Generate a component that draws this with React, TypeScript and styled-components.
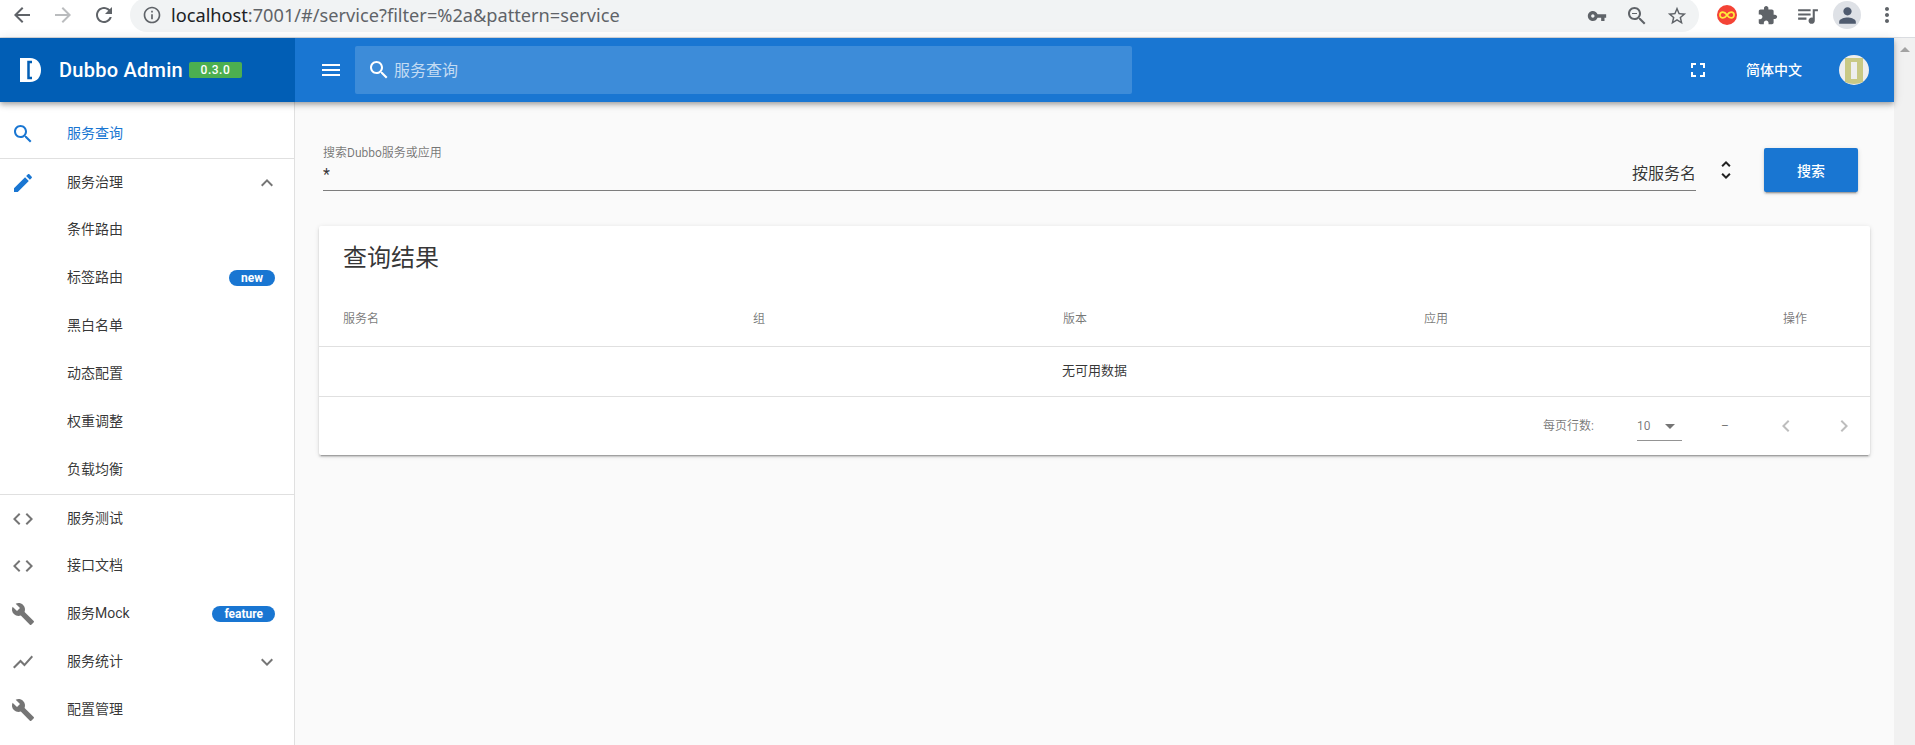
import React from "react";
import styled, { createGlobalStyle } from "styled-components";

const paths = {
  search: "M15.5 14h-.79l-.28-.27C15.41 12.59 16 11.11 16 9.5 16 5.91 13.09 3 9.5 3S3 5.91 3 9.5 5.91 16 9.5 16c1.61 0 3.09-.59 4.23-1.57l.27.28v.79l5 4.99L20.49 19l-4.99-5zm-6 0C7.01 14 5 11.99 5 9.5S7.01 5 9.5 5 14 7.01 14 9.5 11.99 14 9.5 14z",
  edit: "M3 17.25V21h3.75L17.81 9.94l-3.75-3.75L3 17.25zM20.71 7.04c.39-.39.39-1.02 0-1.41l-2.34-2.34c-.39-.39-1.02-.39-1.41 0l-1.83 1.83 3.75 3.75 1.83-1.83z",
  code: "M9.4 16.6L4.8 12l4.6-4.6L8 6l-6 6 6 6 1.4-1.4zm5.2 0l4.6-4.6-4.6-4.6L16 6l6 6-6 6-1.4-1.4z",
  build: "M22.7 19l-9.1-9.1c.9-2.3.4-5-1.5-6.9-2-2-5-2.4-7.4-1.3L9 6 6 9 1.6 4.7C.4 7.1.9 10.1 2.9 12.1c1.9 1.9 4.6 2.4 6.9 1.5l9.1 9.1c.4.4 1 .4 1.4 0l2.3-2.3c.5-.4.5-1.1.1-1.4z",
  chart: "M3.5 18.49l6-6.01 4 4L22 6.92l-1.41-1.41-7.09 7.97-4-4L2 16.99z",
  menu: "M3 18h18v-2H3v2zm0-5h18v-2H3v2zm0-7v2h18V6H3z",
  fullscreen: "M7 14H5v5h5v-2H7v-3zm-2-4h2V7h3V5H5v5zm12 7h-3v2h5v-5h-2v3zM14 5v2h3v3h2V5h-5z",
  expandLess: "M12 8l-6 6 1.41 1.41L12 10.83l4.59 4.58L18 14z",
  expandMore: "M16.59 8.59L12 13.17 7.41 8.59 6 10l6 6 6-6z",
  unfold: "M12 5.83L15.17 9l1.41-1.41L12 3 7.41 7.59 8.83 9 12 5.83zm0 12.34L8.83 15l-1.41 1.41L12 21l4.59-4.59L15.17 15 12 18.17z",
  dropDown: "M7 10l5 5 5-5z",
  chevronLeft: "M15.41 7.41L14 6l-6 6 6 6 1.41-1.41L10.83 12z",
  chevronRight: "M10 6L8.59 7.41 13.17 12l-4.58 4.59L10 18l6-6z",
  back: "M20 11H7.83l5.59-5.59L12 4l-8 8 8 8 1.41-1.41L7.83 13H20v-2z",
  forward: "M12 4l-1.41 1.41L16.17 11H4v2h12.17l-5.58 5.59L12 20l8-8z",
  reload: "M17.65 6.35C16.2 4.9 14.21 4 12 4c-4.42 0-7.99 3.58-7.99 8s3.57 8 7.99 8c3.73 0 6.84-2.55 7.73-6h-2.08c-.82 2.33-3.04 4-5.65 4-3.31 0-6-2.69-6-6s2.69-6 6-6c1.66 0 3.14.69 4.22 1.78L13 11h7V4l-2.35 2.35z",
  info: "M11 7h2v2h-2zm0 4h2v6h-2zm1-9C6.48 2 2 6.48 2 12s4.48 10 10 10 10-4.48 10-10S17.52 2 12 2zm0 18c-4.41 0-8-3.59-8-8s3.59-8 8-8 8 3.59 8 8-3.59 8-8 8z",
  key: "M12.65 10C11.83 7.67 9.61 6 7 6c-3.31 0-6 2.69-6 6s2.69 6 6 6c2.61 0 4.83-1.67 5.65-4H17v4h4v-4h2v-4H12.65zM7 14c-1.1 0-2-.9-2-2s.9-2 2-2 2 .9 2 2-.9 2-2 2z",
  zoomOut: "M15.5 14h-.79l-.28-.27C15.41 12.59 16 11.11 16 9.5 16 5.91 13.09 3 9.5 3S3 5.91 3 9.5 5.91 16 9.5 16c1.61 0 3.09-.59 4.23-1.57l.27.28v.79l5 4.99L20.49 19l-4.99-5zm-6 0C7.01 14 5 11.99 5 9.5S7.01 5 9.5 5 14 7.01 14 9.5 11.99 14 9.5 14zM7 9h5v1H7z",
  star: "M22 9.24l-7.19-.62L12 2 9.19 8.63 2 9.24l5.46 4.73L5.82 21 12 17.27 18.18 21l-1.63-7.03L22 9.24zM12 15.4l-3.76 2.27 1-4.28-3.32-2.88 4.38-.38L12 6.1l1.71 4.04 4.38.38-3.32 2.88 1 4.28L12 15.4z",
  puzzle: "M20.5 11H19V7c0-1.1-.9-2-2-2h-4V3.5C13 2.12 11.88 1 10.5 1S8 2.12 8 3.5V5H4c-1.1 0-1.99.9-1.99 2v3.8H3.5c1.49 0 2.7 1.21 2.7 2.7s-1.21 2.7-2.7 2.7H2V20c0 1.1.9 2 2 2h3.8v-1.5c0-1.49 1.21-2.7 2.7-2.7 1.49 0 2.7 1.21 2.7 2.7V22H17c1.1 0 2-.9 2-2v-4h1.5c1.38 0 2.5-1.12 2.5-2.5S21.88 11 20.5 11z",
  queue: "M15 6H3v2h12V6zm0 4H3v2h12v-2zM3 16h8v-2H3v2zM17 6v8.18c-.31-.11-.65-.18-1-.18-1.66 0-3 1.34-3 3s1.34 3 3 3 3-1.34 3-3V8h3V6h-5z",
  person: "M12 12c2.21 0 4-1.79 4-4s-1.79-4-4-4-4 1.79-4 4 1.79 4 4 4zm0 2c-2.67 0-8 1.34-8 4v2h16v-2c0-2.66-5.33-4-8-4z",
  more: "M12 8c1.1 0 2-.9 2-2s-.9-2-2-2-2 .9-2 2 .9 2 2 2zm0 2c-1.1 0-2 .9-2 2s.9 2 2 2 2-.9 2-2-.9-2-2-2zm0 6c-1.1 0-2 .9-2 2s.9 2 2 2 2-.9 2-2-.9-2-2-2z",
};

type IconName = keyof typeof paths;

const GlobalStyle = createGlobalStyle`
  html, body {
    margin: 0;
    height: 100%;
    overflow: hidden;
  }
  body {
    font-family: Roboto, "Noto Sans CJK SC", sans-serif;
    color: rgba(0, 0, 0, 0.8);
  }
`;

const Svg = styled.svg<{ $size: number; $color: string }>`
  display: block;
  flex: none;
  width: ${(p) => p.$size}px;
  height: ${(p) => p.$size}px;
  fill: ${(p) => p.$color};
`;

const Icon: React.FC<{ name: IconName; size?: number; color?: string }> = ({
  name,
  size = 24,
  color = "rgba(0,0,0,.54)",
}) => (
  <Svg viewBox="0 0 24 24" $size={size} $color={color}>
    <path d={paths[name]} />
  </Svg>
);

const Shell = styled.div`
  display: flex;
  flex-direction: column;
  width: 1915px;
  height: 745px;
  overflow: hidden;
`;

/* browser chrome */
const BrowserBar = styled.div`
  flex: none;
  display: flex;
  align-items: flex-start;
  box-sizing: border-box;
  height: 38px;
  padding-left: 2px;
  background: #fff;
  border-bottom: 1px solid #dadce0;
`;

const NavSlot = styled.div<{ $width?: number }>`
  flex: none;
  display: flex;
  align-items: center;
  justify-content: center;
  width: ${(p) => p.$width ?? 40}px;
  height: 30px;
`;

const NavButtons = styled.div`
  display: flex;
  gap: 1px;
  margin-right: 6px;
`;

const AddressPill = styled.div`
  flex: none;
  display: flex;
  align-items: center;
  box-sizing: border-box;
  width: 1569px;
  height: 34px;
  margin-top: -2px;
  padding: 0 2px 0 12px;
  background: #f1f3f4;
  border-radius: 17px;
`;

const Url = styled.div`
  flex: 1;
  margin-left: 9px;
  font-family: "Noto Sans", sans-serif;
  font-size: 18.2px;
  color: #5f6368;
  white-space: nowrap;

  b {
    font-weight: 400;
    color: #202124;
  }
`;

const PillActions = styled.div`
  display: flex;
  margin-top: 2px;
`;

const Extensions = styled.div`
  display: flex;
  margin-left: 8px;
`;

const ProfileCircle = styled.div`
  display: flex;
  align-items: center;
  justify-content: center;
  width: 28px;
  height: 28px;
  border-radius: 50%;
  background: #dee1e6;
`;

/* page */
const Viewport = styled.div`
  flex: 1;
  display: flex;
  min-height: 0;
`;

const Page = styled.div`
  flex: 1;
  display: flex;
  flex-direction: column;
  min-width: 0;
  background: #fafafa;
`;

const ScrollTrack = styled.div`
  flex: none;
  display: flex;
  justify-content: center;
  width: 21px;
  padding-top: 9px;
  box-sizing: border-box;
  background: #f1f1f1;
`;

const ScrollArrow = styled.div`
  width: 0;
  height: 0;
  border-left: 5px solid transparent;
  border-right: 5px solid transparent;
  border-bottom: 5px solid #a3a3a3;
`;

const AppBar = styled.header`
  flex: none;
  position: relative;
  z-index: 2;
  display: flex;
  align-items: center;
  height: 64px;
  padding-right: 25px;
  background: #1976d2;
  box-shadow: 0 2px 4px -1px rgba(0, 0, 0, 0.2), 0 4px 5px 0 rgba(0, 0, 0, 0.14),
    0 1px 10px 0 rgba(0, 0, 0, 0.12);
`;

const Brand = styled.div`
  flex: none;
  display: flex;
  align-items: center;
  box-sizing: border-box;
  width: 295px;
  height: 100%;
  padding-left: 20px;
  background: #015eb5;
`;

const BrandTitle = styled.div`
  margin-left: 18px;
  font-size: 20px;
  font-weight: 500;
  letter-spacing: 0.25px;
  color: #fff;
  white-space: nowrap;
`;

const VersionBadge = styled.span`
  margin-left: 6px;
  width: 53px;
  height: 16px;
  border-radius: 2px;
  background: #4caf50;
  color: #fff;
  font-size: 12px;
  font-weight: 500;
  line-height: 17px;
  letter-spacing: 0.5px;
  text-align: center;
`;

const MenuToggle = styled.div`
  margin-left: 24px;
`;

const BarSearch = styled.div`
  display: flex;
  align-items: center;
  box-sizing: border-box;
  width: 777px;
  height: 48px;
  margin-left: 12px;
  padding-left: 12px;
  border-radius: 2px;
  background: rgba(255, 255, 255, 0.16);
  font-size: 16px;
  color: rgba(255, 255, 255, 0.7);

  span {
    margin-left: 3px;
    padding-bottom: 2px;
  }
`;

const BarSpacer = styled.div`
  flex: 1;
`;

const Lang = styled.div`
  margin: 0 37px 0 36px;
  padding-bottom: 2px;
  font-size: 14px;
  font-weight: 500;
  color: #fff;
`;

const Avatar = styled.svg`
  display: block;
  flex: none;
  width: 30px;
  height: 30px;
`;

const Below = styled.div`
  flex: 1;
  display: flex;
  min-height: 0;
`;

/* sidebar */
const Sidebar = styled.nav`
  flex: none;
  box-sizing: border-box;
  width: 295px;
  padding-top: 8px;
  background: #fff;
  border-right: 1px solid #e0e0e0;
  overflow: hidden;
`;

const NavRow = styled.div<{ $active?: boolean; $divided?: boolean }>`
  display: flex;
  align-items: center;
  box-sizing: border-box;
  height: 48px;
  padding: 0 15px 0 11px;
  font-size: 14px;
  color: ${(p) => (p.$active ? "#1976d2" : "rgba(0,0,0,.8)")};
  border-top: ${(p) => (p.$divided ? "1px solid #e0e0e0" : "0")};
`;

const NavIcon = styled.div`
  flex: none;
  width: 56px;
`;

const NavLabel = styled.div`
  flex: 1;
  padding-bottom: 4px;
`;

const Pill = styled.span`
  height: 16px;
  margin-right: 4px;
  padding: 0 12px;
  border-radius: 8px;
  background: #1976d2;
  color: #fff;
  font-size: 12px;
  font-weight: 700;
  line-height: 16px;
`;

/* main */
const Main = styled.main`
  flex: 1;
  min-width: 0;
  padding: 42px 24px 0;
`;

const SearchRow = styled.div`
  display: flex;
  align-items: flex-start;
  height: 48px;
  padding: 0 12px 0 4px;
`;

const Field = styled.div`
  flex: 1;
`;

const FieldLabel = styled.div`
  height: 16px;
  margin-top: 1px;
  margin-bottom: -1px;
  font-size: 12px;
  line-height: 16px;
  color: rgba(0, 0, 0, 0.54);
`;

const FieldValue = styled.div`
  display: flex;
  align-items: center;
  justify-content: space-between;
  height: 31px;
  box-sizing: border-box;
  padding-bottom: 6px;
  font-size: 16px;
  border-bottom: 1px solid rgba(0, 0, 0, 0.5);

  span:first-child {
    padding-top: 4px;
  }
`;

const Toggle = styled.div`
  margin: 14px 0 0 18px;
`;

const SearchButton = styled.button`
  width: 94px;
  height: 44px;
  margin: 4px 0 0 26px;
  border: 0;
  border-radius: 2px;
  background: #1976d2;
  color: #fff;
  font-family: inherit;
  font-size: 14px;
  font-weight: 500;
  box-shadow: 0 3px 1px -2px rgba(0, 0, 0, 0.2), 0 2px 2px 0 rgba(0, 0, 0, 0.14),
    0 1px 5px 0 rgba(0, 0, 0, 0.12);
`;

const Card = styled.section`
  margin-top: 34px;
  border-radius: 2px;
  background: #fff;
  box-shadow: 0 3px 1px -2px rgba(0, 0, 0, 0.2), 0 2px 2px 0 rgba(0, 0, 0, 0.14),
    0 1px 5px 0 rgba(0, 0, 0, 0.12);
`;

const CardTitle = styled.h2`
  margin: 0;
  padding: 16px 24px;
  font-size: 24px;
  font-weight: 400;
  line-height: 32px;
`;

const HeadRow = styled.div`
  display: grid;
  grid-template-columns: 410px 310px 361px 359px auto;
  align-items: center;
  box-sizing: border-box;
  height: 57px;
  padding: 0 0 2px 24px;
  border-bottom: 1px solid #e0e0e0;
  font-size: 12px;
  color: rgba(0, 0, 0, 0.54);
`;

const EmptyRow = styled.div`
  display: flex;
  align-items: center;
  justify-content: center;
  box-sizing: border-box;
  height: 50px;
  padding-bottom: 5px;
  border-bottom: 1px solid #e0e0e0;
  font-size: 13px;
`;

const Pager = styled.div`
  display: flex;
  align-items: center;
  justify-content: flex-end;
  height: 58px;
  padding-right: 14px;
  font-size: 12px;
  color: rgba(0, 0, 0, 0.54);
`;

const PagerLabel = styled.div`
  padding-bottom: 4px;
`;

const PageSize = styled.div`
  display: flex;
  align-items: center;
  justify-content: space-between;
  box-sizing: border-box;
  width: 45px;
  height: 30px;
  margin-left: 43px;
  border-bottom: 1px solid rgba(0, 0, 0, 0.42);
`;

const PageRange = styled.div`
  width: 7px;
  margin: 0 46px 0 39px;
`;

const PageNext = styled.div`
  margin-left: 34px;
`;

const links: {
  label: string;
  icon?: IconName;
  iconColor?: string;
  active?: boolean;
  divided?: boolean;
  chevron?: IconName;
  badge?: string;
}[] = [
  { label: "服务查询", icon: "search", iconColor: "#1976d2", active: true },
  { label: "服务治理", icon: "edit", iconColor: "#1976d2", divided: true, chevron: "expandLess" },
  { label: "条件路由" },
  { label: "标签路由", badge: "new" },
  { label: "黑白名单" },
  { label: "动态配置" },
  { label: "权重调整" },
  { label: "负载均衡" },
  { label: "服务测试", icon: "code", divided: true },
  { label: "接口文档", icon: "code" },
  { label: "服务Mock", icon: "build", badge: "feature" },
  { label: "服务统计", icon: "chart", chevron: "expandMore" },
  { label: "配置管理", icon: "build" },
];

const columns = ["服务名", "组", "版本", "应用", "操作"];

const App: React.FC = () => {
  return (
    <Shell>
      <GlobalStyle />
      <BrowserBar>
        <NavButtons>
          <NavSlot><Icon name="back" color="#5f6368" /></NavSlot>
          <NavSlot><Icon name="forward" color="#babcbe" /></NavSlot>
          <NavSlot><Icon name="reload" color="#5f6368" /></NavSlot>
        </NavButtons>
        <AddressPill>
          <Icon name="info" size={20} color="#5f6368" />
          <Url>
            <b>localhost</b>:7001/#/service?filter=%2a&amp;pattern=service
          </Url>
          <PillActions>
            <NavSlot><Icon name="key" size={20} color="#5f6368" /></NavSlot>
            <NavSlot><Icon name="zoomOut" color="#5f6368" /></NavSlot>
            <NavSlot><Icon name="star" size={22} color="#5f6368" /></NavSlot>
          </PillActions>
        </AddressPill>
        <Extensions>
          <NavSlot>
            <svg width="20" height="20" viewBox="0 0 24 24">
              <circle cx="12" cy="12" r="12" fill="#f44336" />
              <path
                d="M12 12c-2-3-3.5-3.5-5-3.5a3.5 3.5 0 000 7c1.500 0 3-.5 5-3.5s3.500-3.500 5-3.500a3.500 3.500 0 010 7c-1.500 0-3-.5-5-3.500z"
                fill="none"
                stroke="#ffeb3b"
                strokeWidth="2"
              />
            </svg>
          </NavSlot>
          <NavSlot><Icon name="puzzle" size={21} color="#5f6368" /></NavSlot>
          <NavSlot><Icon name="queue" size={25} color="#5f6368" /></NavSlot>
          <NavSlot>
            <ProfileCircle><Icon name="person" size={25} color="#4f5b6f" /></ProfileCircle>
          </NavSlot>
          <NavSlot><Icon name="more" color="#5f6368" /></NavSlot>
        </Extensions>
      </BrowserBar>
      <Viewport>
        <Page>
          <AppBar>
            <Brand>
              <svg width="21" height="24" viewBox="0 0 21 24">
                <path d="M0 0H10C17 0 21 5 21 12C21 19 17 24 10 24H0Z" fill="#fff" />
                <path d="M12 4H8.500V20H12" fill="none" stroke="#015eb5" strokeWidth="2.500" />
              </svg>
              <BrandTitle>Dubbo Admin</BrandTitle>
              <VersionBadge>0.3.0</VersionBadge>
            </Brand>
            <MenuToggle><Icon name="menu" color="#fff" /></MenuToggle>
            <BarSearch>
              <Icon name="search" color="#fff" />
              <span>服务查询</span>
            </BarSearch>
            <BarSpacer />
            <Icon name="fullscreen" color="#fff" />
            <Lang>简体中文</Lang>
            <Avatar viewBox="0 0 30 30">
              <circle cx="15" cy="15" r="15" fill="#eee" />
              <path d="M6 3H24V27Q15 31 6 27Z" fill="#c9c985" />
              <rect x="12" y="7" width="6" height="17" fill="#eee" />
            </Avatar>
          </AppBar>
          <Below>
            <Sidebar>
              {links.map((l) => (
                <NavRow key={l.label} $active={l.active} $divided={l.divided}>
                  <NavIcon>{l.icon && <Icon name={l.icon} color={l.iconColor} />}</NavIcon>
                  <NavLabel>{l.label}</NavLabel>
                  {l.badge && <Pill>{l.badge}</Pill>}
                  {l.chevron && <Icon name={l.chevron} />}
                </NavRow>
              ))}
            </Sidebar>
            <Main>
              <SearchRow>
                <Field>
                  <FieldLabel>搜索Dubbo服务或应用</FieldLabel>
                  <FieldValue>
                    <span>*</span>
                    <span>按服务名</span>
                  </FieldValue>
                </Field>
                <Toggle><Icon name="unfold" color="rgba(0,0,0,.87)" /></Toggle>
                <SearchButton type="button">搜索</SearchButton>
              </SearchRow>
              <Card>
                <CardTitle>查询结果</CardTitle>
                <HeadRow>
                  {columns.map((c) => (
                    <div key={c}>{c}</div>
                  ))}
                </HeadRow>
                <EmptyRow>无可用数据</EmptyRow>
                <Pager>
                  <PagerLabel>每页行数:</PagerLabel>
                  <PageSize>
                    10
                    <Icon name="dropDown" />
                  </PageSize>
                  <PageRange>–</PageRange>
                  <Icon name="chevronLeft" color="rgba(0,0,0,.26)" />
                  <PageNext><Icon name="chevronRight" color="rgba(0,0,0,.26)" /></PageNext>
                </Pager>
              </Card>
            </Main>
          </Below>
        </Page>
        <ScrollTrack>
          <ScrollArrow />
        </ScrollTrack>
      </Viewport>
    </Shell>
  );
};

export default App;
